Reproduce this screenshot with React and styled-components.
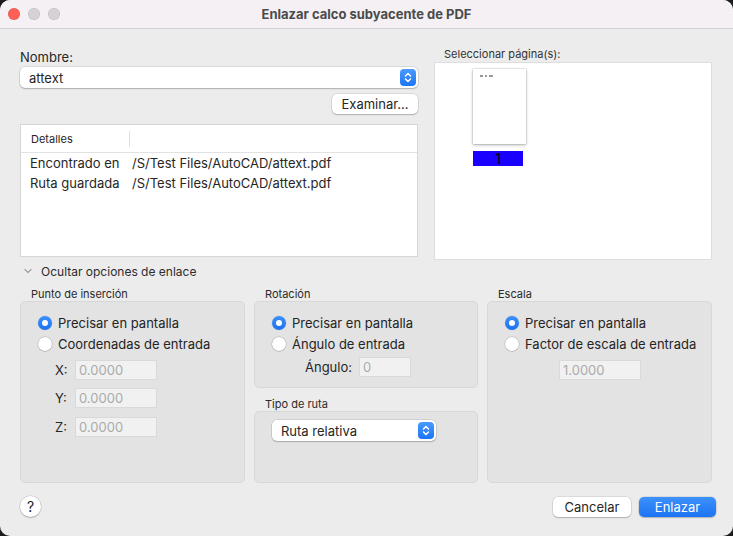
import React from 'react'
import styled, { createGlobalStyle } from 'styled-components'

const GlobalStyle = createGlobalStyle`
  html, body {
    margin: 0;
    padding: 0;
    background: #1c1c1c;
  }
  body {
    font-family: Inter, "Noto Sans", "Liberation Sans", sans-serif;
    font-size: 13px;
    color: #262626;
    -webkit-font-smoothing: antialiased;
  }
`

const Window = styled.div`
  width: 733px;
  height: 536px;
  background: #ececec;
  border-radius: 10px;
  overflow: hidden;
  display: flex;
  flex-direction: column;
`

const TitleBar = styled.div`
  height: 28px;
  flex: none;
  background: #f4f0f4;
  border-bottom: 1px solid #d3cfd3;
  position: relative;
  display: flex;
  align-items: center;
  justify-content: center;
`

const Lights = styled.div`
  position: absolute;
  left: 8px;
  top: 8px;
  display: flex;
  gap: 8px;
`

const Light = styled.span`
  width: 12px;
  height: 12px;
  border-radius: 50%;
  background: ${(p) => p.color};
  box-shadow: inset 0 0 0 0.5px rgba(0, 0, 0, 0.12);
`

const Title = styled.div`
  font-weight: 700;
  font-size: 13px;
  color: #4b4b4b;
`

const Body = styled.div`
  flex: 1;
  padding: 20px 21px 0 20px;
  display: flex;
  flex-direction: column;
`

const Top = styled.div`
  display: grid;
  grid-template-columns: 398px 278px;
  column-gap: 16px;
  align-items: start;
`

const Column = styled.div`
  display: flex;
  flex-direction: column;
  margin-bottom: ${(p) => p.overhang || 0}px;
`

const FieldLabel = styled.div`
  font-size: 13px;
  line-height: 16px;
  height: 16px;
  margin-bottom: 2px;
`

const Popup = styled.div`
  height: 21px;
  width: ${(p) => p.width || 'auto'};
  box-sizing: border-box;
  background: #fff;
  border-radius: 5px;
  box-shadow: 0 0 0 0.5px rgba(0, 0, 0, 0.16), 0 1px 1.5px rgba(0, 0, 0, 0.2);
  display: flex;
  align-items: center;
  justify-content: space-between;
  padding: 0 2px 0 9px;
  font-size: 13px;
`

const Stepper = styled.span`
  width: 16px;
  height: 17px;
  border-radius: 4px;
  background: linear-gradient(#4a9bff, #1c74f4);
  display: flex;
  align-items: center;
  justify-content: center;
`

const Button = styled.button`
  font-family: inherit;
  font-size: 13px;
  height: 20px;
  padding: 0 10px;
  border: none;
  border-radius: 5px;
  background: ${(p) => (p.primary ? 'linear-gradient(#3d92fb, #1b74f2)' : '#fff')};
  color: ${(p) => (p.primary ? '#fff' : '#262626')};
  box-shadow: 0 0 0 0.5px rgba(0, 0, 0, 0.14), 0 1px 1.5px rgba(0, 0, 0, 0.2);
  width: ${(p) => p.width};
  display: flex;
  align-items: center;
  justify-content: center;
`

const BrowseRow = styled.div`
  display: flex;
  justify-content: flex-end;
  margin-top: 6px;
`

const Table = styled.div`
  margin-top: 10px;
  height: 133px;
  box-sizing: border-box;
  background: #fff;
  border: 1px solid #d6d6d6;
`

const TableHead = styled.div`
  height: 27px;
  border-bottom: 1px solid #e2e2e2;
  display: grid;
  grid-template-columns: 109px 1fr;
  align-items: center;
  font-size: 11px;
`

const HeadCell = styled.div`
  padding-left: 10px;
  height: 16px;
  line-height: 16px;
  border-right: ${(p) => (p.divider ? '1px solid #e0e0e0' : 'none')};
`

const TableBody = styled.div`
  padding-top: 0;
`

const TableRow = styled.div`
  display: grid;
  grid-template-columns: 102px 1fr;
  height: 20px;
  line-height: 20px;
  padding-left: 9px;
  font-size: 13px;
  overflow: hidden;
`

const SideLabel = styled.div`
  font-size: 11px;
  line-height: 14px;
  margin: -2px 0 1px 10px;
  color: #333;
`

const PagesBox = styled.div`
  height: 198px;
  box-sizing: border-box;
  background: #fff;
  border: 1px solid #dedede;
  padding: 6px 0 0 38px;
`

const Page = styled.div`
  display: flex;
  flex-direction: column;
  align-items: flex-start;
  gap: 7px;
`

const Thumb = styled.div`
  width: 53px;
  height: 75px;
  background: #fff;
  box-shadow: 0 0 0 0.5px rgba(0, 0, 0, 0.12), 0 1px 3px rgba(0, 0, 0, 0.3);
  padding: 6px 0 0 7px;
  box-sizing: border-box;
  display: flex;
  gap: 2px;
`

const Speck = styled.span`
  width: ${(p) => p.w}px;
  height: 2px;
  background: #9a9a9a;
`

const PageNumber = styled.div`
  width: 50px;
  height: 15px;
  background: #1a00ff;
  color: #000;
  font-size: 14px;
  line-height: 16px;
  text-align: center;
`

const Disclosure = styled.div`
  margin-top: 6px;
  height: 16px;
  display: flex;
  align-items: center;
  gap: 9px;
  padding-left: 4px;
  font-size: 12px;
  color: #2c2c2c;
`

const Groups = styled.div`
  margin-top: 8px;
  display: grid;
  grid-template-columns: 225px 224px 225px;
  column-gap: 9px;
  height: 196px;
`

const Stack = styled.div`
  display: flex;
  flex-direction: column;
`

const GroupTitle = styled.div`
  font-size: 11px;
  line-height: 14px;
  padding-left: 11px;
  color: #2a2a2a;
  margin-top: ${(p) => p.gap || 0}px;
`

const GroupBox = styled.div`
  box-sizing: border-box;
  background: #e3e3e3;
  border: 1px solid #d8d8d8;
  border-radius: 5px;
  padding: ${(p) => p.pad || '10px 0 0 17px'};
  height: ${(p) => p.h}px;
  flex: ${(p) => (p.h ? 'none' : 1)};
`

const RadioRow = styled.label`
  display: flex;
  align-items: center;
  gap: 6px;
  height: 21px;
  font-size: 13px;
  color: #242424;
`

const RadioDot = styled.span`
  width: 14px;
  height: 14px;
  border-radius: 50%;
  box-sizing: border-box;
  flex: none;
  display: flex;
  align-items: center;
  justify-content: center;
  background: ${(p) => (p.on ? 'linear-gradient(#3b90fb, #1a72f2)' : '#fff')};
  box-shadow: ${(p) =>
    p.on
      ? '0 0 0 0.5px rgba(0,0,0,0.1)'
      : '0 0 0 0.5px rgba(0,0,0,0.22), 0 0.5px 1px rgba(0,0,0,0.15)'};
  &::after {
    content: '';
    width: 6px;
    height: 6px;
    border-radius: 50%;
    background: #fff;
    display: ${(p) => (p.on ? 'block' : 'none')};
  }
`

const InputRow = styled.div`
  display: flex;
  align-items: center;
  height: 20px;
  margin-top: ${(p) => p.top || 0}px;
  padding-left: ${(p) => p.indent || 0}px;
`

const InputLabel = styled.span`
  width: ${(p) => p.w}px;
  font-size: 13px;
  color: #262626;
`

const TextField = styled.div`
  width: ${(p) => p.w}px;
  height: 20px;
  box-sizing: border-box;
  background: #f1f1f1;
  border: 1px solid #d9d9d9;
  color: #ababab;
  font-size: 13px;
  line-height: 18px;
  padding-left: 3px;
`

const Footer = styled.div`
  margin-top: 13px;
  display: flex;
  align-items: center;
  justify-content: space-between;
  margin-right: -4px;
`

const Help = styled.div`
  width: 21px;
  height: 21px;
  border-radius: 50%;
  background: #fff;
  box-shadow: 0 0 0 0.5px rgba(0, 0, 0, 0.15), 0 1px 1.5px rgba(0, 0, 0, 0.2);
  display: flex;
  align-items: center;
  justify-content: center;
  font-size: 14px;
  color: #222;
`

const Actions = styled.div`
  display: flex;
  gap: 8px;
  margin-top: 1px;
`

function StepperIcon() {
  return (
    <Stepper>
      <svg width="8" height="11" viewBox="0 0 8 11" fill="none" stroke="#fff" strokeWidth="1.5" strokeLinecap="round" strokeLinejoin="round">
        <path d="M1.5 4 L4 1.5 L6.5 4" />
        <path d="M1.5 7 L4 9.5 L6.5 7" />
      </svg>
    </Stepper>
  )
}

function Radio({ on, children }) {
  return (
    <RadioRow>
      <RadioDot on={on} />
      {children}
    </RadioRow>
  )
}

export default function App() {
  return (
    <>
      <GlobalStyle />
      <Window>
        <TitleBar>
          <Lights>
            <Light color="#fe5f57" />
            <Light color="#d5d1d5" />
            <Light color="#d5d1d5" />
          </Lights>
          <Title>Enlazar calco subyacente de PDF</Title>
        </TitleBar>
        <Body>
          <Top>
            <Column>
              <FieldLabel>Nombre:</FieldLabel>
              <Popup>
                attext
                <StepperIcon />
              </Popup>
              <BrowseRow>
                <Button width="86px">Examinar...</Button>
              </BrowseRow>
              <Table>
                <TableHead>
                  <HeadCell divider>Detalles</HeadCell>
                  <HeadCell />
                </TableHead>
                <TableBody>
                  <TableRow>
                    <span>Encontrado en</span>
                    <span>/S/Test Files/AutoCAD/attext.pdf</span>
                  </TableRow>
                  <TableRow>
                    <span>Ruta guardada</span>
                    <span>/S/Test Files/AutoCAD/attext.pdf</span>
                  </TableRow>
                </TableBody>
              </Table>
            </Column>
            <Column overhang={-3}>
              <SideLabel>Seleccionar página(s):</SideLabel>
              <PagesBox>
                <Page>
                  <Thumb>
                    <Speck w={3} />
                    <Speck w={2} />
                    <Speck w={4} />
                  </Thumb>
                  <PageNumber>1</PageNumber>
                </Page>
              </PagesBox>
            </Column>
          </Top>

          <Disclosure>
            <svg width="8" height="6" viewBox="0 0 8 6" fill="none" stroke="#a3a3a3" strokeWidth="1.2" strokeLinecap="round" strokeLinejoin="round">
              <path d="M1 1.5 L4 4.5 L7 1.5" />
            </svg>
            Ocultar opciones de enlace
          </Disclosure>

          <Groups>
            <Stack>
              <GroupTitle>Punto de inserción</GroupTitle>
              <GroupBox>
                <Radio on>Precisar en pantalla</Radio>
                <Radio>Coordenadas de entrada</Radio>
                <InputRow top={6} indent={17}>
                  <InputLabel w={20}>X:</InputLabel>
                  <TextField w={82}>0.0000</TextField>
                </InputRow>
                <InputRow top={8} indent={17}>
                  <InputLabel w={20}>Y:</InputLabel>
                  <TextField w={82}>0.0000</TextField>
                </InputRow>
                <InputRow top={9} indent={17}>
                  <InputLabel w={20}>Z:</InputLabel>
                  <TextField w={82}>0.0000</TextField>
                </InputRow>
              </GroupBox>
            </Stack>

            <Stack>
              <GroupTitle>Rotación</GroupTitle>
              <GroupBox h={87}>
                <Radio on>Precisar en pantalla</Radio>
                <Radio>Ángulo de entrada</Radio>
                <InputRow top={3} indent={33}>
                  <InputLabel w={54}>Ángulo:</InputLabel>
                  <TextField w={52}>0</TextField>
                </InputRow>
              </GroupBox>
              <GroupTitle gap={9}>Tipo de ruta</GroupTitle>
              <GroupBox pad="8px 0 0 17px">
                <Popup width="164px">
                  Ruta relativa
                  <StepperIcon />
                </Popup>
              </GroupBox>
            </Stack>

            <Stack>
              <GroupTitle>Escala</GroupTitle>
              <GroupBox>
                <Radio on>Precisar en pantalla</Radio>
                <Radio>Factor de escala de entrada</Radio>
                <InputRow top={6} indent={54}>
                  <TextField w={82}>1.0000</TextField>
                </InputRow>
              </GroupBox>
            </Stack>
          </Groups>

          <Footer>
            <Help>?</Help>
            <Actions>
              <Button width="78px">Cancelar</Button>
              <Button primary width="77px">Enlazar</Button>
            </Actions>
          </Footer>
        </Body>
      </Window>
    </>
  )
}
